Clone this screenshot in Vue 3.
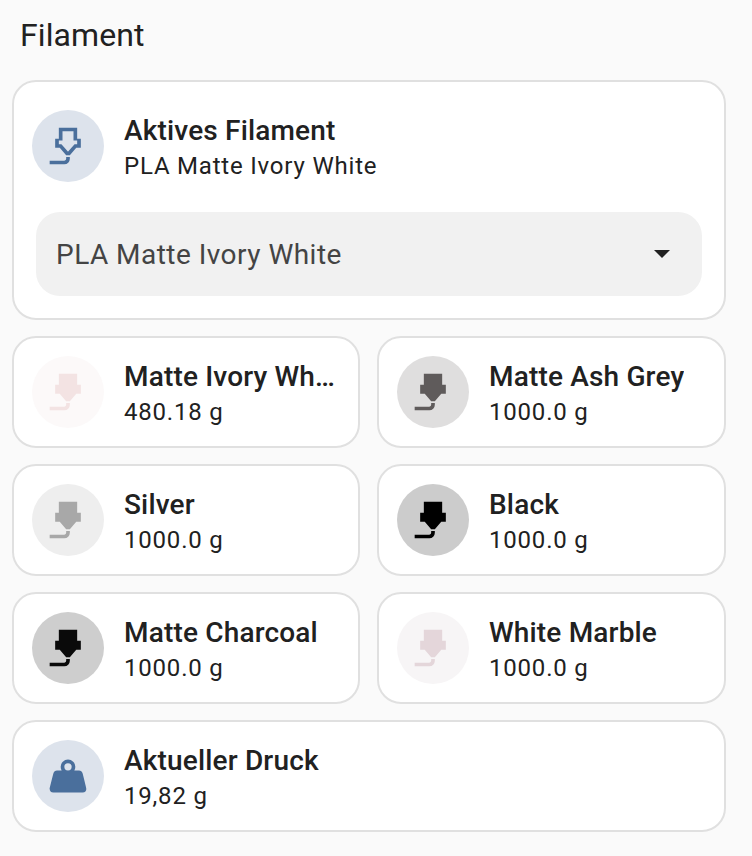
<script setup>
const nozzle =
  "M7,2H17V8H19V13H16.5L13,17H11L7.5,13H5V8H7V2M10,22H2V20H10A1,1 0 0,0 11,19V18H13V19A3,3 0 0,1 10,22Z";
const nozzleOutline =
  "M13,18V19A3,3 0 0,1 10,22H2V20H10A1,1 0 0,0 11,19V18H13M7,2H17V8H19V13H16.5L13,17H11L7.5,13H5V8H7V2M9,4V9H7V11H8.42L11.92,15H12.08L15.58,11H17V9H15V4H9Z";
const weight =
  "M12,3A4,4 0 0,1 16,7C16,7.73 15.81,8.41 15.46,9H18C18.95,9 19.75,9.67 19.95,10.56C21.96,18.57 22,18.78 22,19A2,2 0 0,1 20,21H4A2,2 0 0,1 2,19C2,18.78 2.04,18.57 4.05,10.56C4.25,9.67 5.05,9 6,9H8.54C8.19,8.41 8,7.73 8,7A4,4 0 0,1 12,3M12,5A2,2 0 0,0 10,7A2,2 0 0,0 12,9A2,2 0 0,0 14,7A2,2 0 0,0 12,5Z";

const spools = [
  { name: "Matte Ivory White", amount: "480.18 g", color: "#f3e3e3", bg: "#fcf9f9" },
  { name: "Matte Ash Grey", amount: "1000.0 g", color: "#5f5b5b", bg: "#dfdede" },
  { name: "Silver", amount: "1000.0 g", color: "#a8a8a8", bg: "#eeeeee" },
  { name: "Black", amount: "1000.0 g", color: "#000000", bg: "#cccccc" },
  { name: "Matte Charcoal", amount: "1000.0 g", color: "#0a0a0a", bg: "#cecece" },
  { name: "White Marble", amount: "1000.0 g", color: "#e4d6da", bg: "#f7f5f6" },
];
</script>

<template>
  <div class="panel">
    <h2 class="heading">Filament</h2>

    <section class="card active">
      <div class="tile-row">
        <span class="badge badge-blue">
          <svg viewBox="0 0 24 24" class="icon"><path :d="nozzleOutline" fill="#4a6f9c" /></svg>
        </span>
        <div class="info">
          <div class="name">Aktives Filament</div>
          <div class="sub">PLA Matte Ivory White</div>
        </div>
      </div>
      <div class="select">
        <span>PLA Matte Ivory White</span>
        <i class="arrow"></i>
      </div>
    </section>

    <div class="grid">
      <section v-for="spool in spools" :key="spool.name" class="card tile-row small">
        <span class="badge" :style="{ background: spool.bg }">
          <svg viewBox="0 0 24 24" class="icon"><path :d="nozzle" :fill="spool.color" /></svg>
        </span>
        <div class="info">
          <div class="name">{{ spool.name }}</div>
          <div class="sub">{{ spool.amount }}</div>
        </div>
      </section>
    </div>

    <section class="card tile-row small">
      <span class="badge badge-blue">
        <svg viewBox="0 0 24 24" class="icon"><path :d="weight" fill="#4a6f9c" /></svg>
      </span>
      <div class="info">
        <div class="name">Aktueller Druck</div>
        <div class="sub">19,82 g</div>
      </div>
    </section>
  </div>
</template>

<style>
html,
body {
  background: #fafafa;
}
</style>

<style scoped>
.panel {
  display: flex;
  flex-direction: column;
  gap: 16px;
  padding: 0 26px 24px 12px;
  font-family: Roboto, "Liberation Sans", sans-serif;
  color: #212121;
}

.heading {
  margin: 0;
  height: 64px;
  padding: 17px 0 0 8px;
  box-sizing: border-box;
  font-size: 32px;
  line-height: 36px;
  font-weight: 400;
  letter-spacing: 0.1px;
}

.card {
  box-sizing: border-box;
  background: #fff;
  border: 2px solid #e0e0e0;
  border-radius: 24px;
}

.active {
  height: 240px;
}

.tile-row {
  display: flex;
  align-items: center;
  gap: 20px;
  padding: 0 18px;
}

.active .tile-row {
  height: 128px;
}

.small {
  height: 112px;
}

.badge {
  flex: none;
  display: flex;
  align-items: center;
  justify-content: center;
  width: 72px;
  height: 72px;
  border-radius: 50%;
}

.badge-blue {
  background: #dde3ec;
}

.icon {
  width: 44px;
  height: 44px;
}

.info {
  min-width: 0;
}

.name {
  font-size: 28px;
  line-height: 42px;
  font-weight: 500;
  letter-spacing: 0.17px;
  white-space: nowrap;
  overflow: hidden;
  text-overflow: ellipsis;
}

.sub {
  margin-top: -2px;
  font-size: 24px;
  line-height: 32px;
  letter-spacing: 0.8px;
}

.select {
  display: flex;
  align-items: center;
  justify-content: space-between;
  height: 84px;
  margin: 2px 22px 0;
  padding: 0 32px 0 20px;
  border-radius: 24px;
  background: #f1f1f1;
  font-size: 28px;
  letter-spacing: 0.47px;
  color: #444;
}

.arrow {
  width: 0;
  height: 0;
  border-left: 8px solid transparent;
  border-right: 8px solid transparent;
  border-top: 8px solid #212121;
}

.grid {
  display: grid;
  grid-template-columns: 348px 349px;
  gap: 16px 17px;
}
</style>
